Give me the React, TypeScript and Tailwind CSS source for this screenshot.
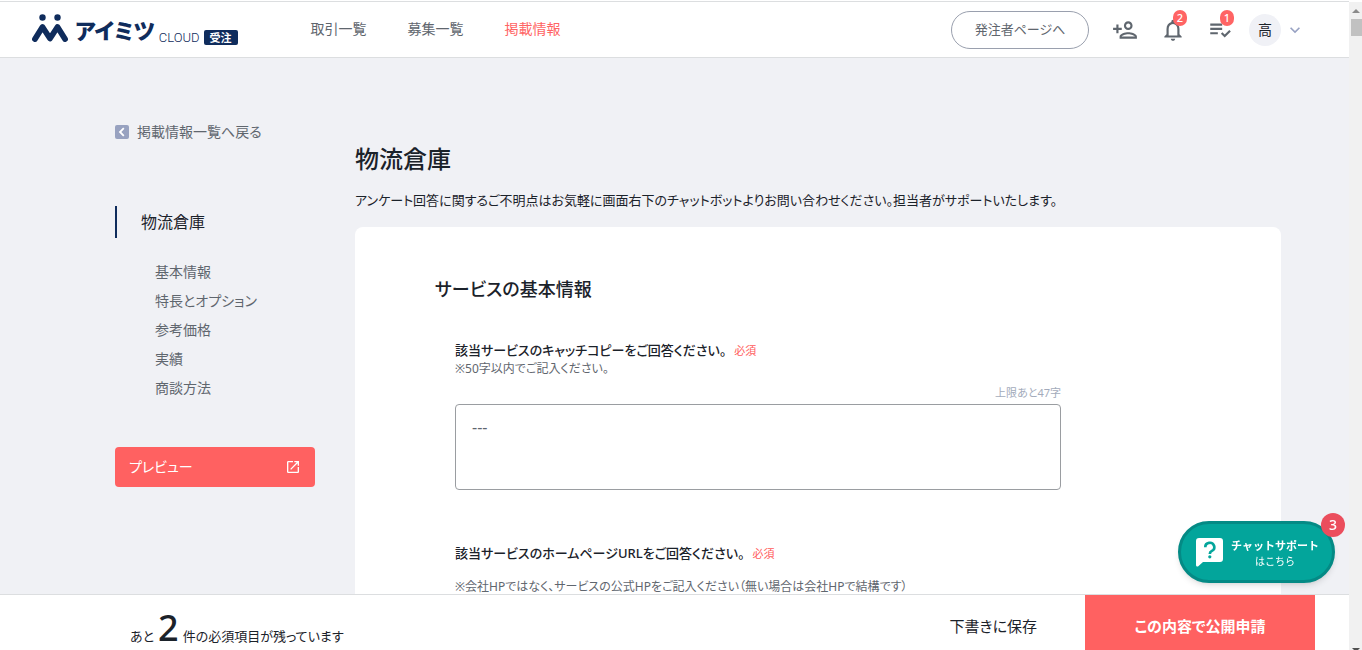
import { useState } from "react";
import {
  MdKeyboardArrowDown,
  MdOpenInNew,
  MdOutlineNotifications,
  MdOutlinePersonAdd,
  MdPlaylistAddCheck,
} from "react-icons/md";

const sections = ["基本情報", "特長とオプション", "参考価格", "実績", "商談方法"];

function Logo() {
  return (
    <a href="#" aria-label="アイミツCLOUD 受注" className="flex items-center text-[#0f2c5c]">
      <svg viewBox="0 0 36 29" className="mb-0.5 h-[29px] w-9" aria-hidden="true">
        <circle cx="10.5" cy="3.5" r="3.2" fill="currentColor" />
        <circle cx="25.5" cy="3.5" r="3.2" fill="currentColor" />
        <path
          d="M3 25L10.5 13L18 24.5L25.5 13L33 25"
          fill="none"
          stroke="currentColor"
          strokeWidth="5.8"
          strokeLinecap="round"
          strokeLinejoin="round"
        />
      </svg>
      <span className="ml-[7px] text-[22px] leading-8 font-black">アイミツ</span>
      <span className="ml-1 self-end font-['Roboto'] text-[13px] leading-4 font-light">CLOUD</span>
      <span className="mb-px ml-1 self-end rounded-xs bg-[#0f2c5c] px-[6px] text-[11px] leading-[15px] font-bold text-white">
        受注
      </span>
    </a>
  );
}

function CountBadge({ children }: { children: string }) {
  return (
    <span className="absolute -top-[7px] -right-px flex h-4 min-w-[14px] items-center justify-center rounded-full bg-[#ff6464] text-[11px] leading-4 font-medium text-white">
      {children}
    </span>
  );
}

function Header() {
  return (
    <header className="mt-px flex h-[57px] shrink-0 items-center border-y border-[#dcdee0] bg-white pr-11 pl-8">
      <Logo />
      <nav className="mb-0.5 ml-[73px] flex gap-[41px] text-sm text-[#5f666e]">
        <a href="#">取引一覧</a>
        <a href="#">募集一覧</a>
        <a href="#" className="text-[#ff6464]">
          掲載情報
        </a>
      </nav>
      <div className="ml-auto flex items-center text-[#5f666e]">
        <button className="h-[38px] w-[138px] rounded-full border border-[#9aa0ae] text-[13px]">
          発注者ページへ
        </button>
        <button aria-label="メンバーを追加" className="ml-[23px]">
          <MdOutlinePersonAdd size={26} />
        </button>
        <button aria-label="お知らせ" className="relative ml-[22px]">
          <MdOutlineNotifications size={26} />
          <CountBadge>2</CountBadge>
        </button>
        <button aria-label="タスク" className="relative ml-[21px]">
          <MdPlaylistAddCheck size={26} />
          <CountBadge>1</CountBadge>
        </button>
        <button className="ml-4 flex items-center gap-1">
          <span className="flex size-8 items-center justify-center rounded-full bg-[#f0f1f6] text-sm text-[#1b222a]">
            高
          </span>
          <MdKeyboardArrowDown size={20} className="text-[#98a2c3]" />
        </button>
      </div>
    </header>
  );
}

function Sidebar() {
  return (
    <aside className="w-[200px] shrink-0 pt-16">
      <a href="#" className="flex items-center gap-2 text-sm leading-5 text-[#5f666e]">
        <svg viewBox="0 0 14 14" className="size-[14px]" aria-hidden="true">
          <rect width="14" height="14" rx="2" fill="#98a2c0" />
          <path d="M8.8 3.2L5 7l3.8 3.8" fill="none" stroke="#fff" strokeWidth="1.8" />
        </svg>
        掲載情報一覧へ戻る
      </a>
      <p className="mt-16 border-l-2 border-[#0f2c5c] pl-6 text-base leading-8 text-[#1b222a]">
        物流倉庫
      </p>
      <ul className="mt-[19px] pl-10 text-sm text-[#5f666e]">
        {sections.map((name) => (
          <li key={name} className="leading-[29px]">
            <a href="#">{name}</a>
          </li>
        ))}
      </ul>
      <button className="mt-[45px] flex h-10 w-full items-center justify-between rounded-sm bg-[#ff6161] px-[14px] text-sm text-white">
        プレビュー
        <MdOpenInNew size={16} />
      </button>
    </aside>
  );
}

function Required() {
  return <span className="ml-2 text-[11px] font-normal text-[#ff5c5c]">必須</span>;
}

function ServiceForm() {
  const [copy, setCopy] = useState("---");
  return (
    <section className="mt-[17px] rounded-t-lg bg-white px-20 pt-[46px]">
      <h2 className="text-lg leading-8 font-medium text-[#1b222a]">サービスの基本情報</h2>
      <div className="mt-[35px] max-w-[646px] px-5">
        <label htmlFor="copy" className="block text-[13px] leading-5 font-medium text-[#1b222a]">
          該当サービスのキャッチコピーをご回答ください。
          <Required />
        </label>
        <p className="text-xs leading-4 text-[#5f666e]">※50字以内でご記入ください。</p>
        <p className="mt-2 text-right text-[11px] leading-4 text-[#a3abbb]">
          上限あと{50 - copy.length}字
        </p>
        <textarea
          id="copy"
          maxLength={50}
          value={copy}
          onChange={(e) => setCopy(e.target.value)}
          className="mt-[3px] block h-[86px] w-full resize-none rounded-sm border border-[#9a9da1] px-4 py-3 text-base leading-5 text-[#5f666e]"
        />
        <label
          htmlFor="url"
          className="mt-[53px] block text-[13px] leading-5 font-medium text-[#1b222a]"
        >
          該当サービスのホームページURLをご回答ください。
          <Required />
        </label>
        <p className="mt-[15px] text-xs leading-4 text-[#5f666e]">
          ※会社HPではなく、サービスの公式HPをご記入ください（無い場合は会社HPで結構です）
        </p>
        <input
          id="url"
          type="url"
          className="my-6 h-12 w-full rounded-sm border border-[#9a9da1] px-4 text-sm"
        />
      </div>
    </section>
  );
}

function ChatButton() {
  return (
    <button className="absolute right-[14px] bottom-[67px] flex h-[62px] w-[157px] items-center rounded-full border-3 border-[#048a85] bg-[#03a59b] pl-[15px] text-white shadow-md">
      <svg viewBox="0 0 27 29" className="h-[29px] w-[27px]" aria-hidden="true">
        <path
          d="M3 0h21a3 3 0 0 1 3 3v18a3 3 0 0 1-3 3H7l-5 4.5Q0 29 0 27V3a3 3 0 0 1 3-3z"
          fill="#fff"
        />
        <path
          d="M9.3 9.2a4.5 4.3 0 1 1 6.6 3.7c-1.5.8-2.1 1.6-2.1 3.1"
          fill="none"
          stroke="#03a59b"
          strokeWidth="2.7"
        />
        <circle cx="13.8" cy="18.8" r="1.6" fill="#03a59b" />
      </svg>
      <span className="ml-2 flex flex-col items-center pt-0.5">
        <span className="text-[11px] leading-4 font-bold [font-feature-settings:normal]">
          チャットサポート
        </span>
        <span className="text-[10px] leading-[14px] [font-feature-settings:normal]">はこちら</span>
      </span>
      <span className="absolute -top-[11px] -right-[13px] flex size-6 items-center justify-center rounded-full bg-[#eb4e5d] text-sm font-medium">
        3
      </span>
    </button>
  );
}

function Footer() {
  return (
    <footer className="flex h-14 shrink-0 items-stretch border-t border-[#dcdee0] bg-white pr-[34px] pl-[130px] text-[#1b222a]">
      <p className="flex items-baseline gap-1 pt-[13px] text-[13px] leading-5">
        あと
        <span className="text-4xl leading-10 font-medium">2</span>
        件の必須項目が残っています
      </p>
      <button className="ml-auto px-12 pt-2 text-[15px]">下書きに保存</button>
      <button className="w-[230px] bg-[#ff6161] pt-2 text-[15px] font-bold text-white">
        この内容で公開申請
      </button>
    </footer>
  );
}

function ScrollTrack() {
  return (
    <div aria-hidden="true" className="mt-0.5 flex w-[13px] shrink-0 flex-col items-center bg-[#f1f1f1]">
      <svg viewBox="0 0 13 17" className="h-[17px] w-[13px]">
        <path d="M3 11L7 7l4 4z" fill="#8b8b8b" />
      </svg>
      <div className="ml-0.5 h-[17px] w-[11px] bg-[#c1c1c1]" />
      <svg viewBox="0 0 13 3" className="mt-auto h-[3px] w-[13px]">
        <path d="M3 1h8l-2 2H5z" fill="#505050" />
      </svg>
    </div>
  );
}

export default function App() {
  return (
    <div className="flex h-screen overflow-hidden bg-white font-['Noto_Sans','Noto_Sans_CJK_JP',sans-serif] [font-feature-settings:'palt']">
      <div className="relative flex min-w-0 flex-1 flex-col">
        <Header />
        <main className="flex min-h-0 flex-1 gap-10 overflow-y-auto bg-[#f0f1f5] pr-[68px] pl-[115px] [scrollbar-width:none]">
          <Sidebar />
          <div className="min-w-0 flex-1 pt-[85px]">
            <h1 className="text-2xl leading-8 font-medium text-[#1b222a]">物流倉庫</h1>
            <p className="mt-[15px] text-[13px] leading-5 text-[#1b222a]">
              アンケート回答に関するご不明点はお気軽に画面右下のチャットボットよりお問い合わせください。担当者がサポートいたします。
            </p>
            <ServiceForm />
          </div>
        </main>
        <Footer />
        <ChatButton />
      </div>
      <ScrollTrack />
    </div>
  );
}
